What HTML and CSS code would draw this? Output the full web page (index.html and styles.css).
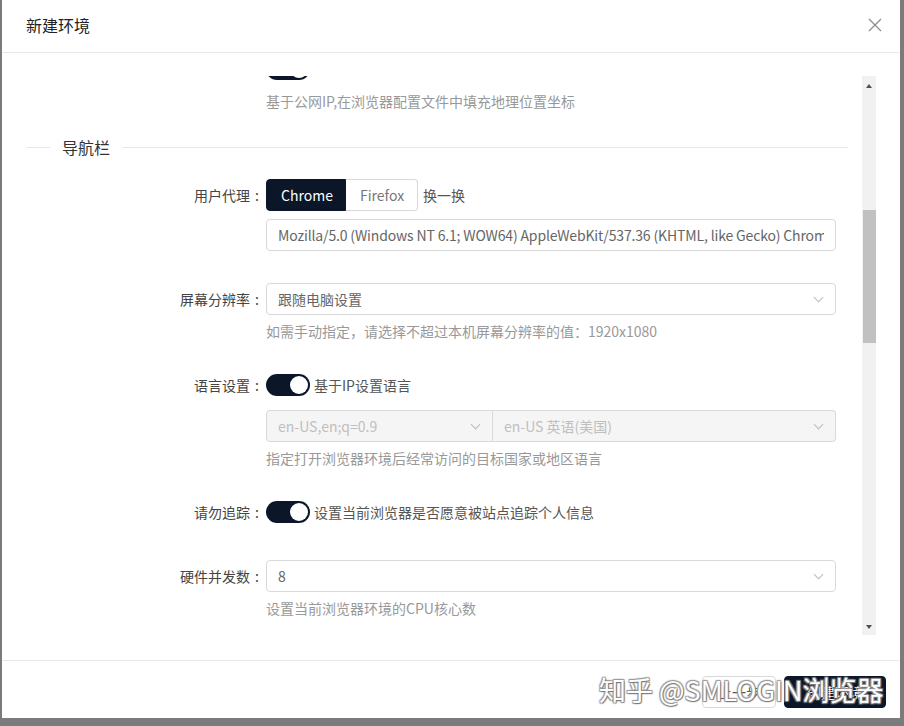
FILE: index.html
```html
<!DOCTYPE html>
<html lang="zh-CN">
<head>
    <meta charset="UTF-8">
    <meta name="viewport" content="width=device-width, initial-scale=1.0">
    <title>新建环境</title>
    <link rel="stylesheet" href="styles.css">
</head>
<body>
    <div class="modal">
        <header class="modal-header">
            <span class="modal-title">新建环境</span>
            <button class="modal-close" aria-label="关闭">
                <svg width="14" height="14" viewBox="0 0 14 14">
                    <path d="M1 1L13 13M13 1L1 13" stroke="#8c8c8c" stroke-width="1.3" fill="none"/>
                </svg>
            </button>
        </header>

        <div class="modal-body">
            <div class="scroll-view">
                <div class="scroll-content">
                    <div class="form-item">
                        <label class="form-label"></label>
                        <div class="form-control">
                            <div class="control-row">
                                <span class="switch on"></span>
                            </div>
                            <div class="help">基于公网IP,在浏览器配置文件中填充地理位置坐标</div>
                        </div>
                    </div>

                    <div class="divider"><span>导航栏</span></div>

                    <div class="form-item no-help">
                        <label class="form-label">用户代理</label>
                        <div class="form-control">
                            <div class="control-row">
                                <div class="radio-group">
                                    <button class="radio-btn checked">Chrome</button>
                                    <button class="radio-btn">Firefox</button>
                                </div>
                                <a class="link">换一换</a>
                            </div>
                            <input class="input ua-input" type="text" value="Mozilla/5.0 (Windows NT 6.1; WOW64) AppleWebKit/537.36 (KHTML, like Gecko) Chrome/86.0.4240.198 Safari/537.36">
                        </div>
                    </div>

                    <div class="form-item">
                        <label class="form-label">屏幕分辨率</label>
                        <div class="form-control">
                            <div class="select">
                                <span class="select-value">跟随电脑设置</span>
                                <span class="chevron"></span>
                            </div>
                            <div class="help">如需手动指定，请选择不超过本机屏幕分辨率的值：1920x1080</div>
                        </div>
                    </div>

                    <div class="form-item">
                        <label class="form-label">语言设置</label>
                        <div class="form-control">
                            <div class="control-row">
                                <span class="switch on"></span>
                                <span class="switch-text">基于IP设置语言</span>
                            </div>
                            <div class="select-group">
                                <div class="select disabled lang-code">
                                    <span class="select-value">en-US,en;q=0.9</span>
                                    <span class="chevron"></span>
                                </div>
                                <div class="select disabled lang-name">
                                    <span class="select-value">en-US 英语(美国)</span>
                                    <span class="chevron"></span>
                                </div>
                            </div>
                            <div class="help">指定打开浏览器环境后经常访问的目标国家或地区语言</div>
                        </div>
                    </div>

                    <div class="form-item no-help">
                        <label class="form-label">请勿追踪</label>
                        <div class="form-control">
                            <div class="control-row">
                                <span class="switch on"></span>
                                <span class="switch-text">设置当前浏览器是否愿意被站点追踪个人信息</span>
                            </div>
                        </div>
                    </div>

                    <div class="form-item">
                        <label class="form-label">硬件并发数</label>
                        <div class="form-control">
                            <div class="select">
                                <span class="select-value">8</span>
                                <span class="chevron"></span>
                            </div>
                            <div class="help">设置当前浏览器环境的CPU核心数</div>
                        </div>
                    </div>
                </div>
            </div>

            <div class="scrollbar">
                <span class="sb-arrow up"></span>
                <div class="sb-track"><div class="sb-thumb"></div></div>
                <span class="sb-arrow down"></span>
            </div>
        </div>

        <footer class="modal-footer">
            <button class="btn">上一步</button>
            <button class="btn btn-primary">创建环境</button>
        </footer>

        <div class="watermark">知乎 @SMLOGIN浏览器</div>
    </div>
</body>
</html>
```

FILE: styles.css
```css
:root {
    --dark: #0b1729;
    --border: #d9d9d9;
    --line: #e8e8e8;
    --text: #333;
    --muted: #999;
}

* {
    box-sizing: border-box;
    margin: 0;
    padding: 0;
}

body {
    background: #7b7b7b;
    font-family: "Noto Sans CJK SC", "Noto Sans", sans-serif;
    font-size: 14px;
    color: var(--text);
    width: 904px;
    height: 726px;
    overflow: hidden;
}

.modal {
    position: relative;
    width: 898px;
    height: 718px;
    margin-left: 2px;
    background: #fff;
    display: flex;
    flex-direction: column;
}

.modal-header {
    height: 53px;
    border-bottom: 1px solid var(--line);
    display: flex;
    align-items: center;
    justify-content: space-between;
    padding: 0 17px 3px 24px;
}

.modal-title {
    font-size: 16px;
    color: #222;
}

.modal-close {
    border: none;
    background: none;
    width: 16px;
    height: 16px;
    display: flex;
    align-items: center;
    justify-content: center;
}

.modal-body {
    height: 607px;
    padding: 23px 24px 25px 24px;
    display: flex;
}

.scroll-view {
    flex: 1;
    overflow: hidden;
}

.scroll-content {
    margin-top: -23px;
}

.scrollbar {
    width: 14px;
    background: #f1f1f1;
    display: flex;
    flex-direction: column;
    align-items: center;
}

.sb-arrow {
    width: 0;
    height: 0;
    border-left: 3.5px solid transparent;
    border-right: 3.5px solid transparent;
}

.sb-arrow.up {
    margin: 8px 0 6px;
    border-bottom: 4px solid #505050;
}

.sb-arrow.down {
    margin: 5px 0 6px;
    border-top: 4px solid #505050;
}

.sb-track {
    flex: 1;
    width: 100%;
}

.sb-thumb {
    margin: 116px 0 0 1px;
    height: 133px;
    background: #c1c1c1;
}

/* form */

.form-item {
    display: grid;
    grid-template-columns: 240px 570px;
    margin-bottom: 28px;
}

.form-item.no-help {
    margin-bottom: 32px;
}

.form-label {
    text-align: right;
    line-height: 32px;
    height: 32px;
    color: #444;
    white-space: nowrap;
}

.form-label:not(:empty)::after {
    content: ":";
    margin: 0 7px 0 5px;
}

.control-row {
    height: 32px;
    display: flex;
    align-items: center;
}

.help {
    margin-top: 6px;
    line-height: 20px;
    color: var(--muted);
}

.divider {
    display: flex;
    align-items: center;
    height: 16px;
    margin: 0 14px 24px 0;
    font-size: 16px;
    color: #333;
}

.divider::before,
.divider::after {
    content: "";
    height: 1px;
    background: var(--line);
}

.divider::before {
    width: 24px;
}

.divider::after {
    flex: 1;
}

.divider span {
    padding: 0 12px;
}

.radio-group {
    display: flex;
}

.radio-btn {
    height: 32px;
    font-family: inherit;
    font-size: 14px;
    background: #fff;
    color: #777;
    border: 1px solid var(--border);
    padding: 0 14px;
}

.radio-btn:first-child {
    border-radius: 4px 0 0 4px;
    width: 80px;
}

.radio-btn:last-child {
    border-radius: 0 4px 4px 0;
    border-left: none;
    width: 72px;
}

.radio-btn.checked {
    background: var(--dark);
    border-color: var(--dark);
    color: #fff;
}

.link {
    margin-left: 5px;
    color: #555;
}

.input,
.select {
    width: 100%;
    height: 32px;
    border: 1px solid var(--border);
    border-radius: 4px;
    font-family: inherit;
    font-size: 14px;
    color: #666;
    background: #fff;
}

.input {
    display: block;
    margin-top: 8px;
    padding: 0 11px;
    outline: none;
}

.ua-input {
    letter-spacing: -0.15px;
}

.select {
    display: flex;
    align-items: center;
    justify-content: space-between;
    padding: 0 13px 0 11px;
}

.chevron {
    width: 7px;
    height: 7px;
    border-right: 1px solid #bbb;
    border-bottom: 1px solid #bbb;
    transform: rotate(45deg);
    margin-top: -4px;
}

.select-group {
    display: flex;
    margin-top: 9px;
}

.select.disabled {
    background: #f5f5f5;
    color: #bfbfbf;
}

.lang-code {
    width: 227px;
    border-radius: 4px 0 0 4px;
}

.lang-name {
    flex: 1;
    border-left: none;
    border-radius: 0 4px 4px 0;
}

.switch {
    position: relative;
    width: 44px;
    height: 22px;
    border-radius: 11px;
    background: #bfbfbf;
    flex-shrink: 0;
}

.switch.on {
    background: var(--dark);
}

.switch::after {
    content: "";
    position: absolute;
    top: 2px;
    left: 2px;
    width: 18px;
    height: 18px;
    border-radius: 50%;
    background: #fff;
}

.switch.on::after {
    left: 24px;
}

.switch-text {
    margin-left: 4px;
    color: #555;
}

/* footer */

.modal-footer {
    flex: 1;
    border-top: 1px solid var(--line);
    display: flex;
    justify-content: flex-end;
    gap: 8px;
    padding: 15px 14px 0;
}

.btn {
    height: 32px;
    padding: 0 15px;
    border: 1px solid var(--border);
    border-radius: 4px;
    background: #fff;
    font-family: inherit;
    font-size: 14px;
    color: #555;
}

.btn-primary {
    width: 102px;
    background: var(--dark);
    border-color: var(--dark);
    color: #fff;
}

.watermark {
    position: absolute;
    left: 597px;
    top: 672px;
    font-size: 27px;
    line-height: 36px;
    color: #fff;
    white-space: nowrap;
    text-shadow: 1px 1px 1px #777, -1px -1px 1px #999, 1px -1px 1px #999, -1px 1px 1px #999;
}
```
